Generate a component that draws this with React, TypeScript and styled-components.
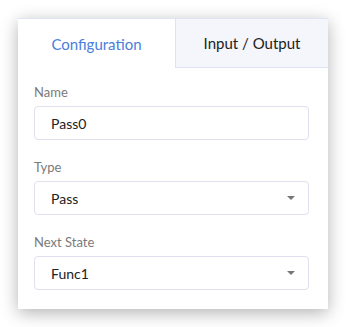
import React from 'react';
import styled, {createGlobalStyle} from 'styled-components';

const Global = createGlobalStyle`
  body {
    margin: 0;
    background: #ffffff;
    font-family: Lato, "Open Sans", sans-serif;
  }
`;

const Card = styled.div`
  margin: 18px 18px;
  width: 310px;
  height: 291px;
  box-sizing: border-box;
  background: #fff;
  border-top: 1px solid #dfe5f6;
  box-shadow: 0 4px 16px rgba(0, 0, 0, 0.3);
  display: flex;
  flex-direction: column;
`;

const Tabs = styled.div`
  display: flex;
  height: 49px;
`;

const Tab = styled.div<{active?: boolean}>`
  flex: ${(p) => (p.active ? '0 0 157px' : '1')};
  display: flex;
  align-items: center;
  justify-content: center;
  font-size: 15px;
  color: ${(p) => (p.active ? '#4a7edb' : '#222')};
  background: ${(p) => (p.active ? '#fff' : '#f4f6fb')};
  border-left: ${(p) => (p.active ? 'none' : '1px solid #dde3f5')};
  border-bottom: ${(p) => (p.active ? 'none' : '1px solid #dde3f5')};
`;

const Body = styled.div`
  padding: 16px 19px 0 16px;
  display: flex;
  flex-direction: column;
  gap: 19px;
`;

const Field = styled.div`
  display: flex;
  flex-direction: column;
  gap: 6px;
`;

const Label = styled.div`
  font-size: 13px;
  line-height: 16px;
  color: #7a7a7a;
`;

const Box = styled.div`
  height: 34px;
  box-sizing: border-box;
  border: 1px solid #dfe1ee;
  border-radius: 4px;
  padding: 0 16px;
  display: flex;
  align-items: center;
  justify-content: space-between;
  font-size: 14px;
  color: #222;
`;

const Caret = styled.span`
  width: 0;
  height: 0;
  margin-right: -3px;
  border-left: 4px solid transparent;
  border-right: 4px solid transparent;
  border-top: 4px solid #777;
`;

const FormField: React.FC<{label: string; value: string; select?: boolean}> = ({
  label,
  value,
  select,
}) => (
  <Field>
    <Label>{label}</Label>
    <Box>
      <span>{value}</span>
      {select && <Caret />}
    </Box>
  </Field>
);

export default function App() {
  return (
    <>
      <Global />
      <Card>
        <Tabs>
          <Tab active>Configuration</Tab>
          <Tab>Input / Output</Tab>
        </Tabs>
        <Body>
          <FormField label="Name" value="Pass0" />
          <FormField label="Type" value="Pass" select />
          <FormField label="Next State" value="Func1" select />
        </Body>
      </Card>
    </>
  );
}
